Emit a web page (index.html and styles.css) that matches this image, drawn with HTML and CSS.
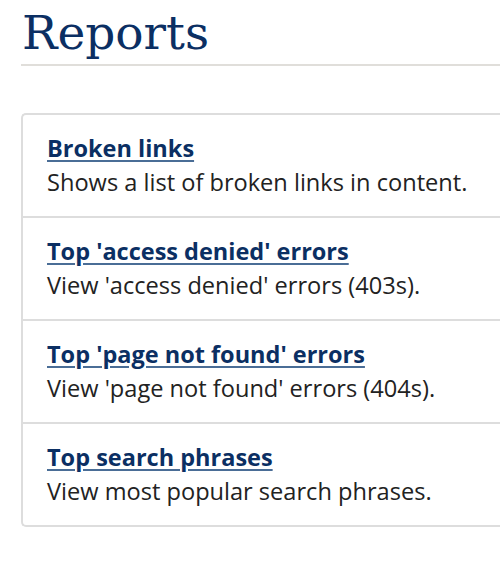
FILE: index.html
```html
<!DOCTYPE html>
<html lang="en">
<head>
  <meta charset="UTF-8" />
  <title>Reports</title>
  <link rel="stylesheet" href="styles.css">
</head>
<body>

  <h1 class="page-title">Reports</h1>

  <ul class="report-list">
    <li class="report-item">
      <a href="#">Broken links</a>
      <p>Shows a list of broken links in content.</p>
    </li>
    <li class="report-item">
      <a href="#">Top 'access denied' errors</a>
      <p>View 'access denied' errors (403s).</p>
    </li>
    <li class="report-item">
      <a href="#">Top 'page not found' errors</a>
      <p>View 'page not found' errors (404s).</p>
    </li>
    <li class="report-item">
      <a href="#">Top search phrases</a>
      <p>View most popular search phrases.</p>
    </li>
  </ul>

</body>
</html>
```

FILE: styles.css
```css
body {
  margin: 0;
  padding: 0 0 0 21px;
  font-family: 'Open Sans', 'Liberation Sans', sans-serif;
  color: #222;
  background: #fff;
}
.page-title {
  font-family: 'DejaVu Serif', serif;
  font-weight: normal;
  font-size: 47px;
  line-height: 1;
  color: #0b2f63;
  margin: 0;
  padding: 9px 0 8px 1px;
  border-bottom: 2px solid #e0deda;
}
.report-list {
  list-style: none;
  margin: 47px 0 0;
  padding: 0;
  border: 2px solid #dddddd;
  border-right: none;
  border-radius: 5px 0 0 5px;
}
.report-item {
  padding: 17px 24px 0;
  height: 84px;
}
.report-item + .report-item {
  border-top: 2px solid #dddddd;
}
.report-item a {
  color: #0b2f63;
  font-weight: bold;
  font-size: 23.5px;
  line-height: 32px;
  text-decoration: underline;
  text-decoration-color: #4a6d96;
  text-underline-offset: 3px;
}
.report-item p {
  margin: 2px 0 0;
  font-size: 23.6px;
  line-height: 32px;
}
```
